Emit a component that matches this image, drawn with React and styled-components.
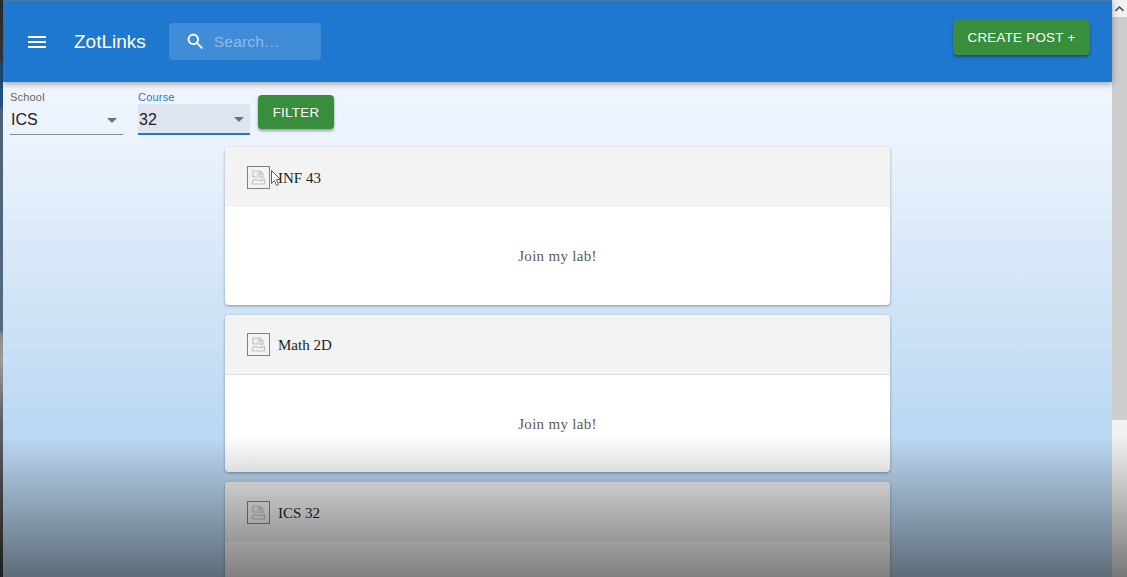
import React from 'react'
import styled, { createGlobalStyle } from 'styled-components';

const GlobalStyle = createGlobalStyle`
    html, body {
        margin: 0;
        height: 100%;
        overflow: hidden;
    }
    #root {
        height: 100%;
    }
`;

const Screen = styled.div`
    position: relative;
    display: flex;
    width: 1127px;
    height: 577px;
    overflow: hidden;
    background: linear-gradient(180deg, #2c2c2c 0, #3a3a3a 60px, #1d4f80 64px, #1d4f80 105px, #4c6276 110px, #4f6a84 330px, #8b8b8b 335px, #9a9a9a 360px, #5a6068 420px, #3d4043 577px);
`;

const Page = styled.div`
    flex: 1;
    margin-left: 3px;
    display: flex;
    flex-direction: column;
    min-width: 0;
    background: linear-gradient(180deg, #f0f5fd 82px, #eaf2fc 150px, #bcd9f3 420px, #bcd9f3 577px);
`;

const AppBar = styled.header`
    flex: none;
    box-sizing: border-box;
    height: 82px;
    display: flex;
    align-items: center;
    padding: 0 22px 0 22px;
    background: #1f78d0;
    border-top: 1px solid #4a7ba8;
    box-shadow: 0 2px 6px rgba(0, 0, 0, 0.35);
    position: relative;
    z-index: 1;
`;

const MenuButton = styled.svg`
    width: 24px;
    height: 24px;
    fill: #fff;
    margin-right: 25px;
`;

const Brand = styled.span`
    font-family: "Liberation Sans", Arial, sans-serif;
    font-size: 19px;
    color: #fff;
`;

const SearchBox = styled.div`
    margin-left: 23px;
    width: 152px;
    height: 37px;
    box-sizing: border-box;
    display: flex;
    align-items: center;
    gap: 8px;
    padding-left: 16px;
    background: rgba(255, 255, 255, 0.15);
    border-radius: 4px;
`;

const SearchIcon = styled.svg`
    width: 21px;
    height: 21px;
    fill: #fff;
    flex: none;
`;

const SearchHint = styled.span`
    font-family: "Liberation Sans", Arial, sans-serif;
    font-size: 15.5px;
    color: #8fbcea;
    letter-spacing: 0.2px;
`;

const GreenButton = styled.button`
    border: 0;
    border-radius: 4px;
    background: #388e3c;
    color: #fff;
    font-family: "Liberation Sans", Arial, sans-serif;
    font-size: 13.3px;
    letter-spacing: 0.3px;
    text-transform: uppercase;
    padding: 0;
    box-shadow: 0 2px 3px rgba(0, 0, 0, 0.35);
`;

const CreateButton = styled(GreenButton)`
    margin-left: auto;
    margin-top: -9px;
    width: 137px;
    height: 35px;
`;

const FilterRow = styled.div`
    flex: none;
    height: 65px;
    display: flex;
    align-items: flex-start;
    padding-left: 7px;
`;

const Field = styled.div`
    width: ${(p) => p.$width}px;
    margin-right: ${(p) => p.$gap}px;
    padding-top: 9px;
`;

const FieldLabel = styled.div`
    font-family: "Liberation Sans", Arial, sans-serif;
    font-size: 11px;
    line-height: 13px;
    color: ${(p) => (p.$active ? '#1f78d0' : '#666')};
    letter-spacing: 0.2px;
`;

const SelectValue = styled.div`
    height: 31px;
    box-sizing: border-box;
    display: flex;
    align-items: center;
    justify-content: space-between;
    padding: 2px 6px 0 1px;
    font-family: "Liberation Sans", Arial, sans-serif;
    font-size: 16px;
    color: #222;
    background: ${(p) => (p.$active ? '#dfe5ee' : 'transparent')};
    border-bottom: ${(p) => (p.$active ? '2px solid #1f78d0' : '1px solid #8a8a8a')};
`;

const Caret = styled.span`
    width: 0;
    height: 0;
    border-left: 5px solid transparent;
    border-right: 5px solid transparent;
    border-top: 5px solid #707070;
`;

const FilterButton = styled(GreenButton)`
    margin-top: 13px;
    width: 76px;
    height: 34px;
`;

const CardList = styled.div`
    width: 665px;
    margin-left: 222px;
    display: flex;
    flex-direction: column;
    gap: 10px;
`;

const Card = styled.article`
    flex: none;
    height: ${(p) => p.$height}px;
    border-radius: 4px;
    overflow: hidden;
    background: #fff;
    box-shadow: 0 1px 3px rgba(0, 0, 0, 0.35);
`;

const CardHeader = styled.div`
    height: 60px;
    box-sizing: border-box;
    display: flex;
    align-items: center;
    gap: 8px;
    padding: 0 22px;
    background: #f3f3f3;
    border-bottom: ${(p) => (p.$line ? '1px solid #dedede' : '0')};
`;

const ImageFrame = styled.span`
    width: 23px;
    height: 23px;
    box-sizing: border-box;
    display: flex;
    align-items: center;
    justify-content: center;
    border: 1px solid #808080;
`;

const CardTitle = styled.span`
    padding-top: 2px;
    font-family: "Liberation Serif", serif;
    font-size: 15px;
    color: #1c1c1c;
`;

const CardBody = styled.div`
    height: 97px;
    box-sizing: border-box;
    padding-top: 2px;
    display: flex;
    align-items: center;
    justify-content: center;
    font-family: "Liberation Serif", serif;
    font-size: 15px;
    color: #5a5a5a;
    letter-spacing: 0.3px;
`;

const Scrollbar = styled.div`
    flex: none;
    width: 15px;
    display: flex;
    flex-direction: column;
    background: #cdcdcd;
`;

const ScrollArrow = styled.div`
    height: 17px;
    display: flex;
    align-items: center;
    justify-content: center;
    background: #f1f1f1;
`;

const ScrollThumb = styled.div`
    margin-top: auto;
    height: 157px;
    background: #f1f1f1;
`;

const Vignette = styled.div`
    position: absolute;
    left: 0;
    right: 0;
    bottom: 0;
    height: 142px;
    pointer-events: none;
    background: linear-gradient(180deg, rgba(0, 0, 0, 0), rgba(0, 0, 0, 0.5));
`;

const Cursor = styled.svg`
    position: absolute;
    left: 271px;
    top: 170px;
    width: 10px;
    height: 18px;
`;

const BrokenImage = () => (
    <svg width="15" height="15" viewBox="0 0 15 15" fill="none" stroke="#c2c2c2" strokeWidth="1.2">
        <path d="M2 1h7l3 3v3H2z" />
        <path d="M9 1v3h3" />
        <path d="M6 5h4M6 3h2" />
        <path d="M1.5 14v-3c2-2 3-2 5-1s4 1 7-.5V14z" />
        <path d="M11 7.5v2" />
    </svg>
);

const courses = [
    { id: 1, name: 'INF 43', body: 'Join my lab!', line: false, height: 158 },
    { id: 2, name: 'Math 2D', body: 'Join my lab!', line: true, height: 157 },
    { id: 3, name: 'ICS 32', body: '', line: false, height: 157 },
];

const App = () => {
    return (
        <Screen>
            <GlobalStyle />
            <Page>
                <AppBar>
                    <MenuButton viewBox="0 0 24 24">
                        <path d="M3 18h18v-2H3v2zm0-5h18v-2H3v2zm0-7v2h18V6H3z" />
                    </MenuButton>
                    <Brand>ZotLinks</Brand>
                    <SearchBox>
                        <SearchIcon viewBox="0 0 24 24">
                            <path d="M15.5 14h-.79l-.28-.27C15.41 12.59 16 11.11 16 9.5 16 5.91 13.09 3 9.5 3S3 5.91 3 9.5 5.91 16 9.5 16c1.61 0 3.09-.59 4.23-1.57l.27.28v.79l5 4.99L20.49 19l-4.99-5zm-6 0C7.01 14 5 11.99 5 9.5S7.01 5 9.5 5 14 7.01 14 9.5 11.99 14 9.5 14z" />
                        </SearchIcon>
                        <SearchHint>Search…</SearchHint>
                    </SearchBox>
                    <CreateButton>Create Post +</CreateButton>
                </AppBar>
                <FilterRow>
                    <Field $width={113} $gap={15}>
                        <FieldLabel>School</FieldLabel>
                        <SelectValue>ICS<Caret /></SelectValue>
                    </Field>
                    <Field $width={112} $gap={8}>
                        <FieldLabel $active>Course</FieldLabel>
                        <SelectValue $active>32<Caret /></SelectValue>
                    </Field>
                    <FilterButton>Filter</FilterButton>
                </FilterRow>
                <CardList>
                    {courses.map(course => {
                        return (
                            <Card key={course.id} $height={course.height}>
                                <CardHeader $line={course.line}>
                                    <ImageFrame><BrokenImage /></ImageFrame>
                                    <CardTitle>{course.name}</CardTitle>
                                </CardHeader>
                                <CardBody>{course.body}</CardBody>
                            </Card>
                        )
                    })}
                </CardList>
            </Page>
            <Scrollbar>
                <ScrollArrow>
                    <svg width="9" height="6" viewBox="0 0 9 6"><path d="M0.5 5L4.5 1l4 4" fill="none" stroke="#505050" strokeWidth="1.6" /></svg>
                </ScrollArrow>
                <ScrollThumb />
            </Scrollbar>
            <Vignette />
            <Cursor viewBox="0 0 10 18">
                <path d="M0.5 0.5v13l3-3 2 5 2-1-2-5h4z" fill="#fff" stroke="#333" strokeWidth="0.8" />
            </Cursor>
        </Screen>
    )
}

export default App
